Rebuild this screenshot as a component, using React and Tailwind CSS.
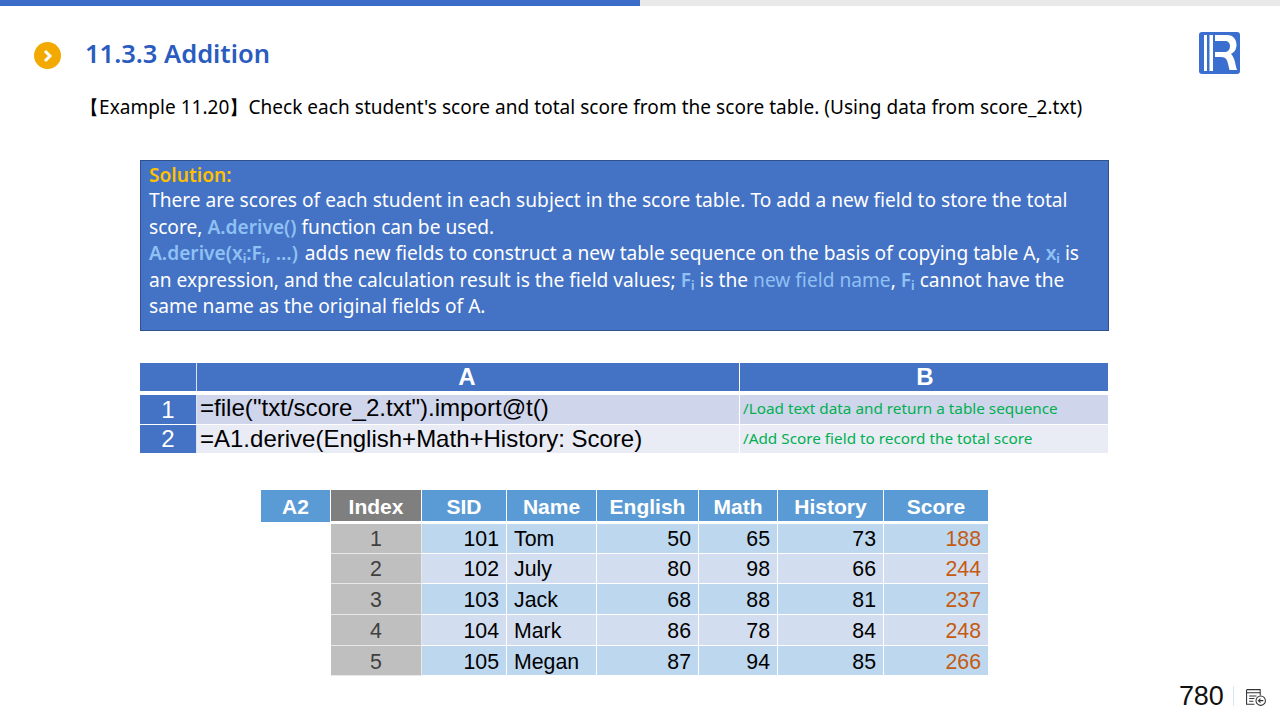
const sans = "font-['Noto_Sans','Open_Sans',sans-serif]";
const arial = "font-['Liberation_Sans',Arial,sans-serif]";

function Logo() {
  return (
    <svg width="41" height="42" viewBox="0 0 41 42" className="shrink-0">
      <rect x="0" y="0" width="41" height="42" rx="3" fill="#3a6fd0" />
      <path d="M5 3h3v36H5zM10.5 3h3.5v36h-3.5z" fill="#fff" />
      <path fillRule="evenodd" d="M16 3H28C34.5 3 37.5 7.5 37.5 13C37.5 17.5 35 20.5 32 22C34 24 35 26.5 36 30C36.5 32.5 37 35 38 38H30.5C29.5 34 29 31 28 28.5C27 26 25 25 22 25H16V20H26C29 20 31 17.5 31 14C31 11 29 9 26 9H16Z" fill="#fff" />
    </svg>
  );
}

function PageIcon() {
  return (
    <svg width="22" height="19" viewBox="0 0 21 18" fill="none" stroke="#333" strokeWidth="1">
      <path d="M1.5 1.5H14.5V7M1.5 1.5V15.5H9" />
      <path d="M1.5 4.5H14.5M4 7.5H11M4 10H9M4 12.5H8" />
      <circle cx="15" cy="12" r="4.5" />
      <path d="M17.5 12H12.8M14.8 10L12.8 12L14.8 14" />
    </svg>
  );
}

const rows = [
  [1, 101, "Tom", 50, 65, 73, 188, "h-[30px]", "pt-[3px]"],
  [2, 102, "July", 80, 98, 66, 244, "h-[30px]", "pt-[3px]"],
  [3, 103, "Jack", 68, 88, 81, 237, "h-[31px]", "pt-[4px]"],
  [4, 104, "Mark", 86, 78, 84, 248, "h-[31px]", "pt-[4px]"],
  [5, 105, "Megan", 87, 94, 85, 266, "h-[30px]", "pt-[5px]"],
];
const heads = ["SID", "Name", "English", "Math", "History", "Score"];
const Sub = ({ children }) => <sub className="text-[12px] leading-none font-bold">{children}</sub>;

export default function App() {
  return (
    <div className={`w-[1280px] h-[720px] bg-white overflow-hidden flex flex-col ${sans}`}>
      <div className="h-[6px] flex shrink-0">
        <div className="w-[640px] bg-[#3b6cc8]" />
        <div className="flex-1 bg-[#e9e9e9]" />
      </div>

      <div className="h-[68px] shrink-0 flex items-start pl-[34px] pr-[40px] pt-[26px]">
        <div className="w-[27px] h-[27px] mt-[10px] rounded-full bg-[#f2a900] flex items-center justify-center shrink-0">
          <svg width="12" height="14" viewBox="0 0 12 14" fill="none" stroke="#fff" strokeWidth="3">
            <path d="M3 2L8 7L3 12" />
          </svg>
        </div>
        <div className="ml-[24px] mt-[3px] text-[25.5px] leading-[36px] font-semibold text-[#2a5cbf]">11.3.3 Addition</div>
        <div className="ml-auto"><Logo /></div>
      </div>

      <div className="pl-[80px] mt-[19px] text-[19px] leading-[28px] text-black h-[28px] whitespace-nowrap tracking-[0.04px]">
        【Example 11.20】Check each student's score and total score from the score table. (Using data from score_2.txt)
      </div>

      <div className="ml-[140px] mt-[39px] w-[969px] h-[171px] bg-[#4472c4] border border-[#2f528f] px-[8px] text-white text-[19.15px] leading-[26.4px]">
        <div className="h-[26.4px] pt-px font-semibold text-[#ffc000]">Solution:</div>
        <div>There are scores of each student in each subject in the score table. To add a new field to store the total</div>
        <div>score, <span className="font-semibold text-[#8fc1f5]">A.derive()</span> function can be used.</div>
        <div className="whitespace-nowrap">
          <span className="font-semibold text-[#8fc1f5] mr-[7px]">A.derive(x<Sub>i</Sub>:F<Sub>i</Sub>, …)</span>adds new fields to construct a new table sequence on the basis of copying table A, <span className="font-semibold text-[#8fc1f5]">x<Sub>i</Sub></span> is
        </div>
        <div className="whitespace-nowrap">
          an expression, and the calculation result is the field values; <span className="font-semibold text-[#8fc1f5]">F<Sub>i</Sub></span> is the <span className="text-[#8fc1f5]">new field name</span>, <span className="font-semibold text-[#8fc1f5]">F<Sub>i</Sub></span> cannot have the
        </div>
        <div>same name as the original fields of A.</div>
      </div>

      <div className={`ml-[140px] mt-[32px] w-[968px] grid grid-cols-[57px_543px_368px] ${arial}`}>
        <div className="h-[28px] bg-[#4472c4] border-r border-[#dbe4f3]" />
        <div className="h-[28px] bg-[#4472c4] border-r border-white flex items-center justify-center text-white font-bold text-[24px] pr-[2px]">A</div>
        <div className="h-[28px] bg-[#4472c4] flex items-center justify-center text-white font-bold text-[24px] pl-[2px]">B</div>

        <div className="h-[29px] mt-[4px] bg-[#4472c4] flex items-center justify-center text-white text-[24px] border-r border-[#dbe4f3]">1</div>
        <div className="h-[29px] mt-[4px] pb-[2px] bg-[#cfd5ea] border-r border-white flex items-center pl-[3px] text-black text-[24.1px] whitespace-nowrap">=file("txt/score_2.txt").import@t()</div>
        <div className={`h-[29px] mt-[4px] pb-[2px] bg-[#cfd5ea] flex items-center pl-[3px] text-[#00b050] text-[15.3px] whitespace-nowrap ${sans}`}>/Load text data and return a table sequence</div>

        <div className="h-[28px] mt-[1px] bg-[#4472c4] flex items-center justify-center text-white text-[24px] border-r border-[#dbe4f3]">2</div>
        <div className="h-[28px] mt-[1px] bg-[#e9ebf5] border-r border-white flex items-center pl-[3px] text-black text-[24px] whitespace-nowrap">=A1.derive(English+Math+History: Score)</div>
        <div className={`h-[28px] mt-[1px] pb-[2px] bg-[#e9ebf5] flex items-center pl-[3px] text-[#00b050] text-[15.3px] whitespace-nowrap ${sans}`}>/Add Score field to record the total score</div>
      </div>

      <div className={`ml-[261px] mt-[37px] w-[727px] grid grid-cols-[70px_91px_85px_90px_102px_79px_106px_104px] ${arial}`}>
        <div className="h-[32px] pt-[2px] bg-[#5b9bd5] border-r border-white flex items-center justify-center text-white font-bold text-[21px]">A2</div>
        <div className="h-[31px] pt-[2px] bg-[#7f7f7f] border-r border-white flex items-center justify-center text-white font-bold text-[21px]">Index</div>
        {heads.map((h, i) => (
          <div key={h} className={`h-[31px] pt-[2px] bg-[#5b9bd5] flex items-center justify-center text-white font-bold text-[21px] ${i < 5 ? "border-r border-white" : ""}`}>{h}</div>
        ))}
        {rows.map((r, i) => {
          const bg = i % 2 === 0 ? "bg-[#bdd7ee]" : "bg-[#d2deef]";
          const h = r[7];
          const pad = r[8];
          const cell = `${h} ${pad} ${bg} flex items-center text-[21.3px] text-black border-r border-b border-white`;
          const top = i === 0 ? "mt-[2px]" : "";
          return [
            <div key={`e${i}`} className={`${h} ${top}`} />,
            <div key={`i${i}`} className={`${h} ${pad} ${top} bg-[#bfbfbf] flex items-center justify-center text-[21.3px] text-[#404040] border-r border-b border-[#e8e8e8]`}>{r[0]}</div>,
            <div key={`s${i}`} className={`${cell} ${top} justify-end pr-[7px]`}>{r[1]}</div>,
            <div key={`n${i}`} className={`${cell} ${top} pl-[7px]`}>{r[2]}</div>,
            <div key={`a${i}`} className={`${cell} ${top} justify-end pr-[7px]`}>{r[3]}</div>,
            <div key={`b${i}`} className={`${cell} ${top} justify-end pr-[7px]`}>{r[4]}</div>,
            <div key={`c${i}`} className={`${cell} ${top} justify-end pr-[7px]`}>{r[5]}</div>,
            <div key={`d${i}`} className={`${h} ${pad} ${top} ${bg} flex items-center justify-end pr-[7px] text-[21.3px] text-[#c55a11] border-b border-white`}>{r[6]}</div>,
          ];
        })}
      </div>

      <div className={`mt-[2px] ml-[1179px] flex items-center ${arial}`}>
        <span className="text-[27px] leading-[36px] text-[#111] tracking-[-0.2px]">780</span>
        <span className="ml-[10px] w-px h-[20px] bg-[#dbe6f3]" />
        <span className="ml-[11px] mt-[2px]"><PageIcon /></span>
      </div>
    </div>
  );
}
